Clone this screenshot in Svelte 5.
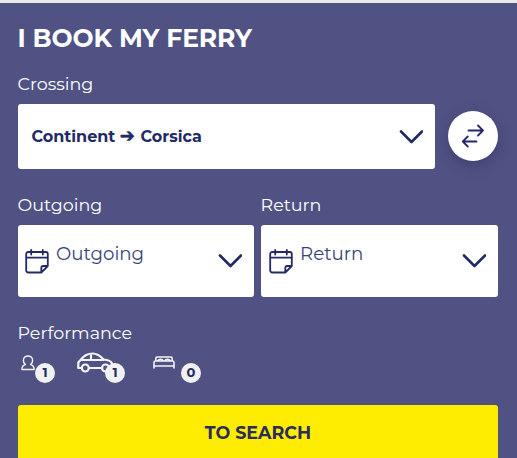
<script>
    let reversed = $state(false);

    let ports = $derived(reversed ? ['Corsica', 'Continent'] : ['Continent', 'Corsica']);

    const dates = [
        { id: 'outgoing', label: 'Outgoing' },
        { id: 'return', label: 'Return' }
    ];

    const services = [
        { id: 'passengers', count: 1 },
        { id: 'vehicles', count: 1 },
        { id: 'cabins', count: 0 }
    ];
</script>

{#snippet chevron()}
    <svg class="chevron" width="24" height="14" viewBox="0 0 24 14">
        <path d="M2 1.500 12.500 12 23 1.500" />
    </svg>
{/snippet}

<section class="booking">
    <h1>I BOOK MY FERRY</h1>

    <div class="label crossing-label">Crossing</div>
    <div class="crossing">
        <button class="select">
            <span class="route">{ports[0]} <span class="arrow">➔</span> {ports[1]}</span>
            {@render chevron()}
        </button>
        <button class="swap" aria-label="Swap" onclick={() => (reversed = !reversed)}>
            <svg width="24" height="24" viewBox="0 0 24 24">
                <path d="M7.500 6.500H22M17 1.500l5 5-5 5M15.500 17.500H1.800M6.800 12.500l-5 5 5 5" />
            </svg>
        </button>
    </div>

    <div class="dates">
        {#each dates as date}
            <div class="date">
                <div class="label">{date.label}</div>
                <button class="picker">
                    <svg class="calendar" width="24" height="26" viewBox="0 0 24 26">
                        <path d="M1.200 6a2 2 0 0 1 2-2h17.600a2 2 0 0 1 2 2V18l-6.500 6.500H3.200a2 2 0 0 1-2-2zM1.200 9.700h21.600M6.200 2v4.500M17.800 2v4.500M22.800 18h-4.500a2 2 0 0 0-2 2v4.500" />
                    </svg>
                    <span class="value">{date.label}</span>
                    {@render chevron()}
                </button>
            </div>
        {/each}
    </div>

    <div class="label services-label">Performance</div>
    <div class="services">
        {#each services as service}
            <div class="service {service.id}">
                {#if service.id === 'passengers'}
                    <svg width="14" height="16" viewBox="0 0 14 16">
                        <path d="M4.500 9.500C1.200 7.200 1.700 1 7 1s5.800 6.200 2.500 8.500c2.500.5 3.500 2 3.700 5H.8c.2-3 1.200-4.500 3.700-5z" />
                    </svg>
                {:else if service.id === 'vehicles'}
                    <svg width="38" height="21" viewBox="0 0 38 21">
                        <path d="M4.500 16H1.300V10.500L4 7.500C7 3.500 10 1.500 15.500 1.500c5 0 8 2.500 11 6 4 .3 7.500 1.500 8.500 4V16h-2M12 16h12.500M4.500 8h22M14 2v6" />
                        <circle cx="8.300" cy="16" r="3.500" />
                        <circle cx="28.500" cy="16" r="3.500" />
                    </svg>
                {:else}
                    <svg width="22" height="14" viewBox="0 0 22 14">
                        <path d="M2.800 5V2.500Q2.800 1 4.300 1h13.400Q19.200 1 19.200 2.500V5M1 12V6.500Q1 5 2.500 5h17Q21 5 21 6.500V12M1 10h20M5 4.500Q5.500 3.200 7.500 3.200T10 4.500M12 4.500Q12.500 3.200 14.500 3.200T17 4.500" />
                    </svg>
                {/if}
                <span class="badge">{service.count}</span>
            </div>
        {/each}
    </div>

    <button class="search">TO SEARCH</button>
</section>

<style>
    :global(body) {
        overflow: hidden;
        background: #505283;
    }

    .booking {
        box-sizing: border-box;
        height: 458px;
        padding: 15px 19px 0 18px;
        overflow: hidden;
        border-top: 3px solid #e8eaea;
        background: #505283;
        color: #fff;
        font-family: Montserrat, Inter, sans-serif;
    }

    h1 {
        margin: 0 0 0 -0.5px;
        height: 40px;
        font-size: 25px;
        font-weight: 700;
        line-height: 40px;
        letter-spacing: -0.1px;
        white-space: nowrap;
    }

    button {
        margin: 0;
        padding: 0;
        border: none;
        border-radius: 3px;
        background: #fff;
        color: #232965;
        font-family: inherit;
        cursor: pointer;
    }

    svg {
        display: block;
        flex-shrink: 0;
        fill: none;
        stroke: #232965;
        stroke-linecap: round;
        stroke-linejoin: round;
    }

    .label {
        height: 30px;
        margin-left: -0.5px;
        font-size: 17.5px;
        font-weight: 400;
        line-height: 30px;
        white-space: nowrap;
    }
    .crossing-label {
        padding-top: 11px;
        height: 35px;
    }

    .crossing {
        display: flex;
        align-items: center;
        gap: 13px;
    }

    .select {
        flex: 1;
        height: 65px;
        display: flex;
        align-items: center;
        justify-content: space-between;
        padding: 0 12px 0 13.5px;
    }

    .route {
        font-size: 16px;
        font-weight: 700;
        white-space: nowrap;
    }
    .arrow {
        margin-right: 1px;
        font-family: "DejaVu Sans", sans-serif;
        font-size: 18px;
        line-height: 16px;
        -webkit-text-stroke: 0.5px #232965;
    }

    .chevron {
        stroke-width: 2.6;
    }

    .swap {
        width: 50px;
        height: 50px;
        display: flex;
        align-items: center;
        justify-content: center;
        margin-bottom: 1px;
        border-radius: 50%;
        box-shadow: 0 4px 14px rgba(35, 41, 80, 0.4);
    }
    .swap svg {
        stroke-width: 1.8;
    }

    .dates {
        display: grid;
        grid-template-columns: 236px 237px;
        gap: 7px;
        padding-top: 21px;
    }
    .date .label {
        height: 35px;
    }

    .picker {
        width: 100%;
        height: 72px;
        display: flex;
        align-items: center;
        padding: 0 12px 0 7px;
    }
    .date:last-child .picker {
        padding-left: 8px;
    }

    .calendar {
        stroke-width: 1.8;
    }

    .value {
        flex: 1;
        padding: 0 0 15px 7px;
        color: #3a3f75;
        font-size: 18.2px;
        font-weight: 400;
        text-align: left;
    }

    .services-label {
        padding-top: 21px;
    }

    .services {
        display: flex;
        height: 57px;
        padding-left: 3px;
    }
    .service {
        position: relative;
        width: 56px;
    }
    .service svg {
        stroke: #f4f4f8;
        stroke-width: 1.3;
    }
    .vehicles {
        width: 76px;
    }
    .service.vehicles svg {
        stroke-width: 2.2;
    }
    .passengers svg {
        margin-top: 7px;
    }
    .vehicles svg {
        margin-top: 4px;
    }
    .service.cabins svg {
        margin-top: 8px;
        stroke-width: 1.6;
    }

    .badge {
        position: absolute;
        top: 15px;
        left: 14px;
        width: 20px;
        height: 20px;
        border-radius: 50%;
        background: #f1f1f1;
        color: #232965;
        font-size: 13px;
        font-weight: 700;
        line-height: 19px;
        text-align: center;
    }
    .vehicles .badge,
    .cabins .badge {
        left: 28px;
    }

    .search {
        display: block;
        width: 100%;
        height: 55px;
        background: #ffed00;
        color: #2b2d5f;
        font-size: 17.5px;
        font-weight: 700;
    }
</style>
